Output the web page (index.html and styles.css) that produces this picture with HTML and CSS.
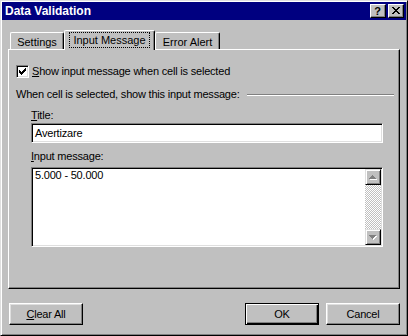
FILE: index.html
```html
<!DOCTYPE html>
<html lang="en">
  <head>
    <meta charset="UTF-8" />
    <meta name="viewport" content="width=device-width, initial-scale=1.0" />
    <title>Data Validation</title>
    <link rel="stylesheet" href="styles.css">
  </head>
  <body>
    <div class="window">
      <div class="titlebar">
        <span class="title">Data Validation</span>
        <div class="caption-buttons">
          <span class="cap-btn help">?</span>
          <span class="cap-btn close">
            <svg width="8" height="7" viewBox="0 0 8 7" shape-rendering="crispEdges">
              <path d="M0 0h2v1h1v1h2V1h1V0h2v1H7v1H6v1H5v1h1v1h1v1h1v1H6V6H5V5H3v1H2v1H0V6h1V5h1V4h1V3H2V2H1V1H0z" fill="#000"/>
            </svg>
          </span>
        </div>
      </div>

      <div class="dialog">
        <div class="tabs">
          <div class="tab tab-settings">Settings</div>
          <div class="tab tab-input active"><span class="focus">Input Message</span></div>
          <div class="tab tab-error">Error Alert</div>
        </div>

        <div class="panel">
          <div class="check-row">
            <span class="checkbox">
              <svg width="7" height="7" viewBox="0 0 7 7" shape-rendering="crispEdges">
                <path d="M6 0h1v3H6v1H5v1H4v1H3v1H2V6H1V5H0V2h1v1h1v1h1V3h1V2h1V1h1z" fill="#000"/>
              </svg>
            </span>
            <span><u>S</u>how input message when cell is selected</span>
          </div>

          <div class="group-label">
            <span>When cell is selected, show this input message:</span>
            <span class="rule"></span>
          </div>

          <div class="group">
            <div class="field-label"><u>T</u>itle:</div>
            <div class="textbox">Avertizare</div>

            <div class="field-label second"><u>I</u>nput message:</div>
            <div class="memo">
              <div class="memo-text">5.000 - 50.000</div>
              <div class="scrollbar">
                <span class="arrow-btn">
                  <svg width="8" height="5" viewBox="0 0 8 5" shape-rendering="crispEdges">
                    <path d="M4 1h1v1h1v1h1v1h1v1H1V4h1V3h1V2h1z" fill="#fff"/>
                    <path d="M3 0h1v1h1v1h1v1h1v1H0V3h1V2h1V1h1z" fill="#808080"/>
                  </svg>
                </span>
                <span class="track"></span>
                <span class="arrow-btn">
                  <svg width="8" height="5" viewBox="0 0 8 5" shape-rendering="crispEdges">
                    <path d="M1 1h7v1H7v1H6v1H5v1H4V4H3V3H2V2H1z" fill="#fff"/>
                    <path d="M0 0h7v1H6v1H5v1H4v1H3V3H2V2H1V1H0z" fill="#808080"/>
                  </svg>
                </span>
              </div>
            </div>
          </div>
        </div>

        <div class="actions">
          <span class="btn"><u>C</u>lear All</span>
          <span class="btn default">OK</span>
          <span class="btn">Cancel</span>
        </div>
      </div>
    </div>
  </body>
</html>
```

FILE: styles.css
```css
body {
  margin: 0;
  background-color: #c0c0c0;
  font-family: "Liberation Sans", Arial, sans-serif;
  font-size: 11px;
  color: #000;
}

.window {
  width: 408px;
  height: 336px;
  box-sizing: border-box;
  padding: 1px;
  background-color: #c0c0c0;
  border: 1px solid;
  border-color: #dfdfdf #000 #000 #dfdfdf;
  box-shadow: inset 1px 1px #fff, inset -1px -1px #808080;
}

/* title bar */
.titlebar {
  height: 18px;
  display: flex;
  align-items: center;
  justify-content: space-between;
  padding: 0 2px 0 3px;
  background-color: #000080;
  color: #fff;
}

.title {
  font-size: 12px;
  font-weight: bold;
}

.caption-buttons {
  display: flex;
  gap: 2px;
}

.cap-btn {
  width: 16px;
  height: 14px;
  box-sizing: border-box;
  display: flex;
  align-items: center;
  justify-content: center;
  background-color: #c0c0c0;
  border: 1px solid;
  border-color: #fff #000 #000 #fff;
  box-shadow: inset -1px -1px #808080;
  color: #000;
}

.help {
  font-weight: bold;
  font-size: 11px;
  line-height: 12px;
  padding-right: 1px;
}

.close svg {
  margin-left: -1px;
  margin-top: -1px;
}

/* dialog body */
.dialog {
  padding: 0 6px;
  letter-spacing: -0.2px;
}

.tabs {
  display: flex;
  align-items: flex-end;
  height: 19px;
  margin-top: 10px;
  padding-left: 2px;
}

.tab {
  height: 17px;
  box-sizing: border-box;
  padding-top: 3px;
  text-align: center;
  line-height: 13px;
  letter-spacing: 0;
  border-top: 1px solid #fff;
  border-left: 1px solid #fff;
  border-right: 1px solid #000;
  border-radius: 2px 2px 0 0;
  box-shadow: inset -1px 0 #808080;
}

.tab-settings {
  width: 54px;
}

.tab-input {
  width: 91px;
}

.tab-error {
  width: 65px;
}

.tab.active {
  height: 20px;
  margin-bottom: -1px;
  padding-top: 1px;
  position: relative;
  z-index: 1;
  background-color: #c0c0c0;
}

.focus {
  display: inline-block;
  padding: 1px 3px 0;
  border: 1px dotted #000;
}

.panel {
  height: 240px;
  box-sizing: border-box;
  padding: 15px 5px 0 7px;
  border: 1px solid;
  border-color: #fff #000 #000 #fff;
  box-shadow: inset -1px -1px #808080;
}

.check-row {
  display: flex;
  align-items: center;
  gap: 3px;
  height: 13px;
  line-height: 13px;
}

.checkbox {
  width: 13px;
  height: 13px;
  box-sizing: border-box;
  display: flex;
  align-items: center;
  justify-content: center;
  background-color: #fff;
  border: 1px solid;
  border-color: #808080 #fff #fff #808080;
  box-shadow: inset 1px 1px #000, inset -1px -1px #dfdfdf;
}

.group-label {
  display: flex;
  align-items: center;
  margin-top: 10px;
  line-height: 13px;
}

.rule {
  flex: 1;
  margin-left: 7px;
  margin-top: 1px;
  border-top: 1px solid #808080;
  border-bottom: 1px solid #fff;
}

.group {
  margin: 8px 11px 0 15px;
}

.field-label {
  line-height: 13px;
  margin-bottom: 1px;
}

.field-label.second {
  margin-top: 7px;
  margin-bottom: 4px;
}

.textbox,
.memo {
  box-sizing: border-box;
  background-color: #fff;
  border: 1px solid;
  border-color: #808080 #fff #fff #808080;
  box-shadow: inset 1px 1px #000, inset -1px -1px #dfdfdf;
}

.textbox {
  height: 20px;
  padding: 0 3px;
  line-height: 18px;
}

.memo {
  height: 80px;
  display: flex;
  padding: 1px;
}

.memo-text {
  flex: 1;
  padding: 0 2px;
  line-height: 13px;
}

.scrollbar {
  width: 16px;
  display: flex;
  flex-direction: column;
}

.arrow-btn {
  width: 16px;
  height: 16px;
  box-sizing: border-box;
  display: flex;
  align-items: center;
  justify-content: center;
  background-color: #c0c0c0;
  border: 1px solid;
  border-color: #dfdfdf #000 #000 #dfdfdf;
  box-shadow: inset 1px 1px #fff, inset -1px -1px #808080;
}

.track {
  flex: 1;
  background: repeating-conic-gradient(#c0c0c0 0 25%, #fff 0 50%) 0 0 / 2px 2px;
}

/* buttons */
.actions {
  display: flex;
  margin-top: 14px;
  padding-left: 1px;
  gap: 7px;
}

.btn {
  width: 74px;
  height: 22px;
  box-sizing: border-box;
  display: flex;
  align-items: center;
  justify-content: center;
  border: 1px solid;
  border-color: #fff #000 #000 #fff;
  box-shadow: inset -1px -1px #808080, inset 1px 1px #dfdfdf;
}

.btn.default {
  margin-left: auto;
  border-color: #000;
  box-shadow: inset 1px 1px #fff, inset -1px -1px #000, inset -2px -2px #808080;
}
```
